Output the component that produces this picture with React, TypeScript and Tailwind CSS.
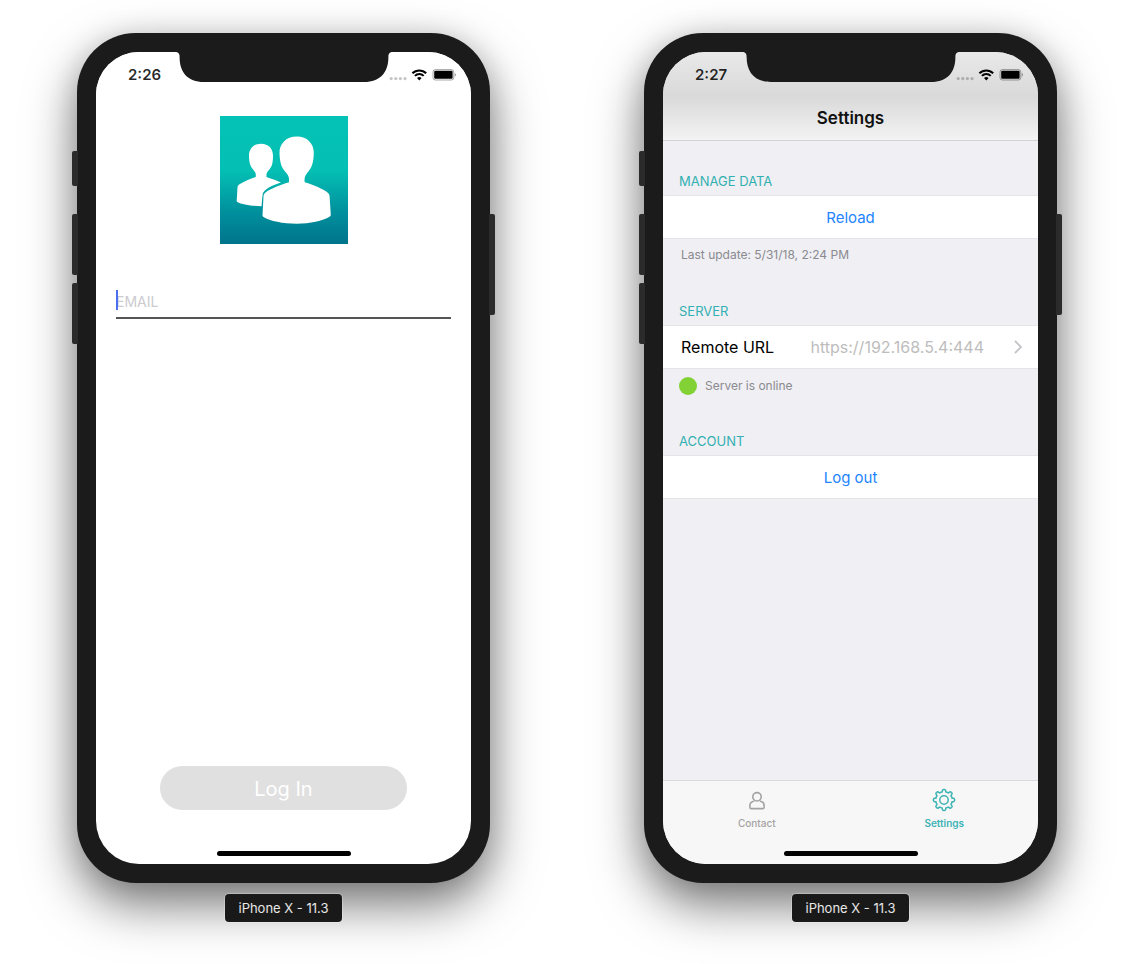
import type { ReactNode } from "react";

const TEETH = 8;

function gearPath(): string {
  const at = (radius: number, degrees: number) => {
    const a = (degrees * Math.PI) / 180;
    return `${(12 + radius * Math.sin(a)).toFixed(2)} ${(12 - radius * Math.cos(a)).toFixed(2)}`;
  };
  let d = "";
  for (let i = 0; i < TEETH; i++) {
    const c = (i * 360) / TEETH;
    d += i === 0 ? `M${at(8.2, c - 13)}` : `A4.5 4.5 0 0 1 ${at(8.2, c - 13)}`;
    d += `L${at(9.5, c - 10)}Q${at(10.6, c - 8)} ${at(10.6, c - 2)}L${at(10.6, c + 2)}`;
    d += `Q${at(10.6, c + 8)} ${at(9.5, c + 10)}L${at(8.2, c + 13)}`;
  }
  return `${d}A4.5 4.5 0 0 1 ${at(8.2, -13)}Z`;
}

function GearIcon() {
  return (
    <svg viewBox="0 0 24 24" className="size-6" fill="none" stroke="currentColor" strokeWidth="1.5" strokeLinejoin="round" aria-hidden="true">
      <path d={gearPath()} />
      <circle cx="12" cy="12" r="4.2" />
    </svg>
  );
}

function PersonIcon() {
  return (
    <svg viewBox="0 0 24 24" className="size-6" fill="none" stroke="currentColor" strokeWidth="1.6" strokeLinejoin="round" strokeLinecap="round" aria-hidden="true">
      <circle cx="12" cy="8.8" r="4.2" />
      <path d="M8.6 13.2C6 13.7 4.900 15.200 4.900 17.600V19.200C4.900 20.200 5.400 20.600 6.300 20.600H17.700C18.600 20.600 19.100 20.200 19.100 19.200V17.600C19.100 15.200 18 13.700 15.400 13.200" />
    </svg>
  );
}

function PeopleLogo() {
  return (
    <svg viewBox="0 0 128 128" className="size-32" role="img" aria-label="Contacts">
      <defs>
        <linearGradient id="logo-fill" x1="0" y1="0" x2="0" y2="1">
          <stop offset="0" stopColor="#04c2b5" />
          <stop offset="0.42" stopColor="#04c0b4" />
          <stop offset="0.75" stopColor="#00909d" />
          <stop offset="1" stopColor="#00748c" />
        </linearGradient>
      </defs>
      <rect width="128" height="128" fill="url(#logo-fill)" />
      <path
        fill="#fff"
        d="M41 27.7C49 27.7 53.3 33 53 40.5C52.8 49 51.5 51 48.5 54.5C46.5 56.8 46.3 58 46.5 61C52 63 57.5 64.8 61 66.5C51 69.5 44 73.5 42.7 78C42.2 82 41.8 86 41.6 90.2C32 90.2 22 88.5 17.3 86C16.8 85.6 16.7 85.2 16.7 84.7L17.5 71.5C17.6 70 18 69.3 19.5 68.3C24 65.3 30 62.8 35.7 61C36 58 35.7 56.5 33.5 54C30.7 50.5 29.2 48 29 40.5C28.7 33 33.5 27.7 41 27.7Z"
      />
      <path
        fill="#fff"
        d="M76.7 20.5C87.5 20.5 94.2 28 93.8 37.5C93.4 48 91.5 51.5 88 56C85 59.5 84.3 61.5 84.7 66.3C94 69 103 73 107.5 76.5C109 77.8 109.5 78.8 109.6 80.5L110.8 98.5C110.8 99.6 110.5 100.1 109.5 100.8C103 105 90 107.7 76.7 107.7C63 107.7 50 105 43.5 101C42.6 100.4 42.4 99.9 42.5 99L43.5 80.5C43.6 78.8 44 77.8 45.5 76.5C50 73 60 69 69 66.3C69.4 61.5 68.7 59.5 65.5 56C61.5 51.5 59.9 47 59.5 37.5C59.1 28 66 20.5 76.7 20.5Z"
      />
    </svg>
  );
}

function StatusIcons() {
  return (
    <svg viewBox="0 0 68 14" className="h-3.5 w-[68px]" aria-hidden="true">
      <g fill="#000" opacity="0.22">
        <circle cx="2.2" cy="10.6" r="1.6" />
        <circle cx="6.8" cy="10.6" r="1.6" />
        <circle cx="11.4" cy="10.6" r="1.6" />
        <circle cx="16" cy="10.6" r="1.6" />
      </g>
      <path d="M30.3 12.400L28 10A3.300 3.300 0 0 1 32.600 10Z" fill="#000" />
      <path d="M25.900 7.900A6.300 6.300 0 0 1 34.700 7.900M23.400 5.300A9.800 9.800 0 0 1 37.200 5.300" fill="none" stroke="#000" strokeWidth="2" />
      <rect x="44" y="1.600" width="20.800" height="10.400" rx="2.400" fill="none" stroke="#000" strokeOpacity="0.35" />
      <rect x="45.200" y="2.800" width="18.400" height="8" rx="1.200" fill="#000" />
      <path d="M65.800 5C67.300 5.400 67.300 8.200 65.800 8.600Z" fill="#000" opacity="0.4" />
    </svg>
  );
}

function Notch() {
  return (
    <svg viewBox="0 0 218 30" className="absolute left-1/2 top-0 h-[30px] w-[218px] -translate-x-1/2 text-[#1b1b1b]" fill="currentColor" aria-hidden="true">
      <path d="M0 0C3.5 0 4.6 1.6 4.6 5C4.6 20 12.5 30 29 30H189C205.5 30 213.4 20 213.4 5C213.4 1.6 214.5 0 218 0Z" />
    </svg>
  );
}

function Phone({ time, screen, bar, children }: { time: string; screen: string; bar: string; children: ReactNode }) {
  return (
    <figure className="flex flex-col items-center gap-[11px]">
      <div className="relative w-full max-w-[413px]">
        <div className="relative rounded-[59px] bg-[#1b1b1b] p-[19px] shadow-[0_22px_50px_rgba(0,0,0,0.52),0_2px_30px_rgba(0,0,0,0.12)]">
          <div className={`relative flex min-h-[812px] flex-col overflow-hidden rounded-[43px] ${screen}`}>
            <Notch />
            <div className={`flex h-11 items-center justify-between pl-8 pr-3.5 pt-0.5 ${bar}`}>
              <span className="text-[15px] font-semibold text-black/85">{time}</span>
              <StatusIcons />
            </div>
            {children}
            <span className="absolute bottom-2 left-1/2 h-[5px] w-[134px] -translate-x-1/2 rounded-full bg-black" />
          </div>
        </div>
        <span className="absolute -left-[5px] top-[118px] h-[35px] w-1.5 rounded-l-xs bg-[#2b2b2b]" />
        <span className="absolute -left-[5px] top-[181px] h-[61px] w-1.5 rounded-l-xs bg-[#2b2b2b]" />
        <span className="absolute -left-[5px] top-[250px] h-[61px] w-1.5 rounded-l-xs bg-[#2b2b2b]" />
        <span className="absolute -right-[5px] top-[181px] h-[101px] w-1.5 rounded-r-xs bg-[#2b2b2b]" />
      </div>
      <figcaption className="relative flex h-7 items-center rounded bg-[#191919] px-[13px] pt-0.5 text-[13px] text-white/90 shadow-[0_0_0_1px_rgba(255,255,255,0.25)]">
        iPhone X - 11.3
      </figcaption>
    </figure>
  );
}

function LoginScreen() {
  return (
    <form className="flex flex-1 flex-col items-center px-5 pb-[54px] pt-5" onSubmit={(e) => e.preventDefault()}>
      <PeopleLogo />
      <div className="relative mt-11 w-full border-b-2 border-[#555]">
        <span className="absolute left-0 top-0.5 h-5 w-0.5 bg-[#4b6ff0]" />
        <input
          type="email"
          aria-label="Email"
          placeholder="EMAIL"
          className="block h-[29px] w-full bg-transparent pb-0.5 text-sm outline-none placeholder:text-[#cbcbd0]"
        />
      </div>
      <button type="submit" className="mt-auto h-11 w-full max-w-[247px] rounded-full bg-[#e0e0e0] pt-0.5 text-xl text-white">
        Log In
      </button>
    </form>
  );
}

function Section({ title, children, footer }: { title: string; children: ReactNode; footer?: ReactNode }) {
  return (
    <section>
      <h2 className="flex h-[54px] items-end px-4 pb-1.5 text-[13px] leading-4 text-[#33b0b1]">{title}</h2>
      <div className="h-11 border-y border-[#e5e5e9] bg-white">{children}</div>
      <div className="flex h-8 items-center px-4 text-xs text-[#8a8a8f]">{footer}</div>
    </section>
  );
}

function SettingsScreen() {
  return (
    <>
      <header className="flex h-[45px] items-center justify-center border-b border-[#d2d2d6] bg-linear-to-b from-[#d9d9d9] to-[#f3f3f3] pt-0.5">
        <h1 className="text-[17px] font-semibold text-[#111]">Settings</h1>
      </header>
      <main className="flex-1">
        <Section title="MANAGE DATA" footer={<p className="px-0.5">Last update: 5/31/18, 2:24 PM</p>}>
          <button className="size-full pt-0.5 text-[15px] text-[#2384ff]">Reload</button>
        </Section>
        <Section
          title="SERVER"
          footer={
            <p className="flex items-center gap-2 pt-0.5">
              <span className="size-[18px] rounded-full bg-[#82d235]" />
              Server is online
            </p>
          }
        >
          <button className="flex size-full items-center pl-[18px] pr-4 text-base">
            <span className="text-black">Remote URL</span>
            <span className="ml-auto pr-[30px] text-[#bdbdbd]">https://192.168.5.4:444</span>
            <svg viewBox="0 0 8 14" className="h-3.5 w-2" fill="none" stroke="#c4c4c8" strokeWidth="1.8" aria-hidden="true">
              <path d="M1 1L7 7L1 13" />
            </svg>
          </button>
        </Section>
        <Section title="ACCOUNT">
          <button className="size-full pt-0.5 text-[15px] text-[#2384ff]">Log out</button>
        </Section>
      </main>
      <nav className="grid h-[84px] grid-cols-2 items-start border-t border-[#d9d9de] bg-[#f7f7f7] text-[10px] font-medium leading-3">
        <a href="#contact" className="flex flex-col items-center gap-[5px] pt-[7px] text-[#a3a3a3]">
          <PersonIcon />
          Contact
        </a>
        <a href="#settings" className="flex flex-col items-center gap-[5px] pt-[7px] font-semibold text-[#3db3b5]">
          <GearIcon />
          Settings
        </a>
      </nav>
    </>
  );
}

export default function App() {
  return (
    <div className="grid min-h-screen content-start bg-white pb-10 pt-[33px] font-['Inter','Liberation_Sans',sans-serif] sm:grid-cols-2">
      <Phone time="2:26" screen="bg-white" bar="bg-white">
        <LoginScreen />
      </Phone>
      <Phone time="2:27" screen="bg-[#efeff4]" bar="bg-linear-to-b from-[#e9e9e9] to-[#d9d9d9]">
        <SettingsScreen />
      </Phone>
    </div>
  );
}
